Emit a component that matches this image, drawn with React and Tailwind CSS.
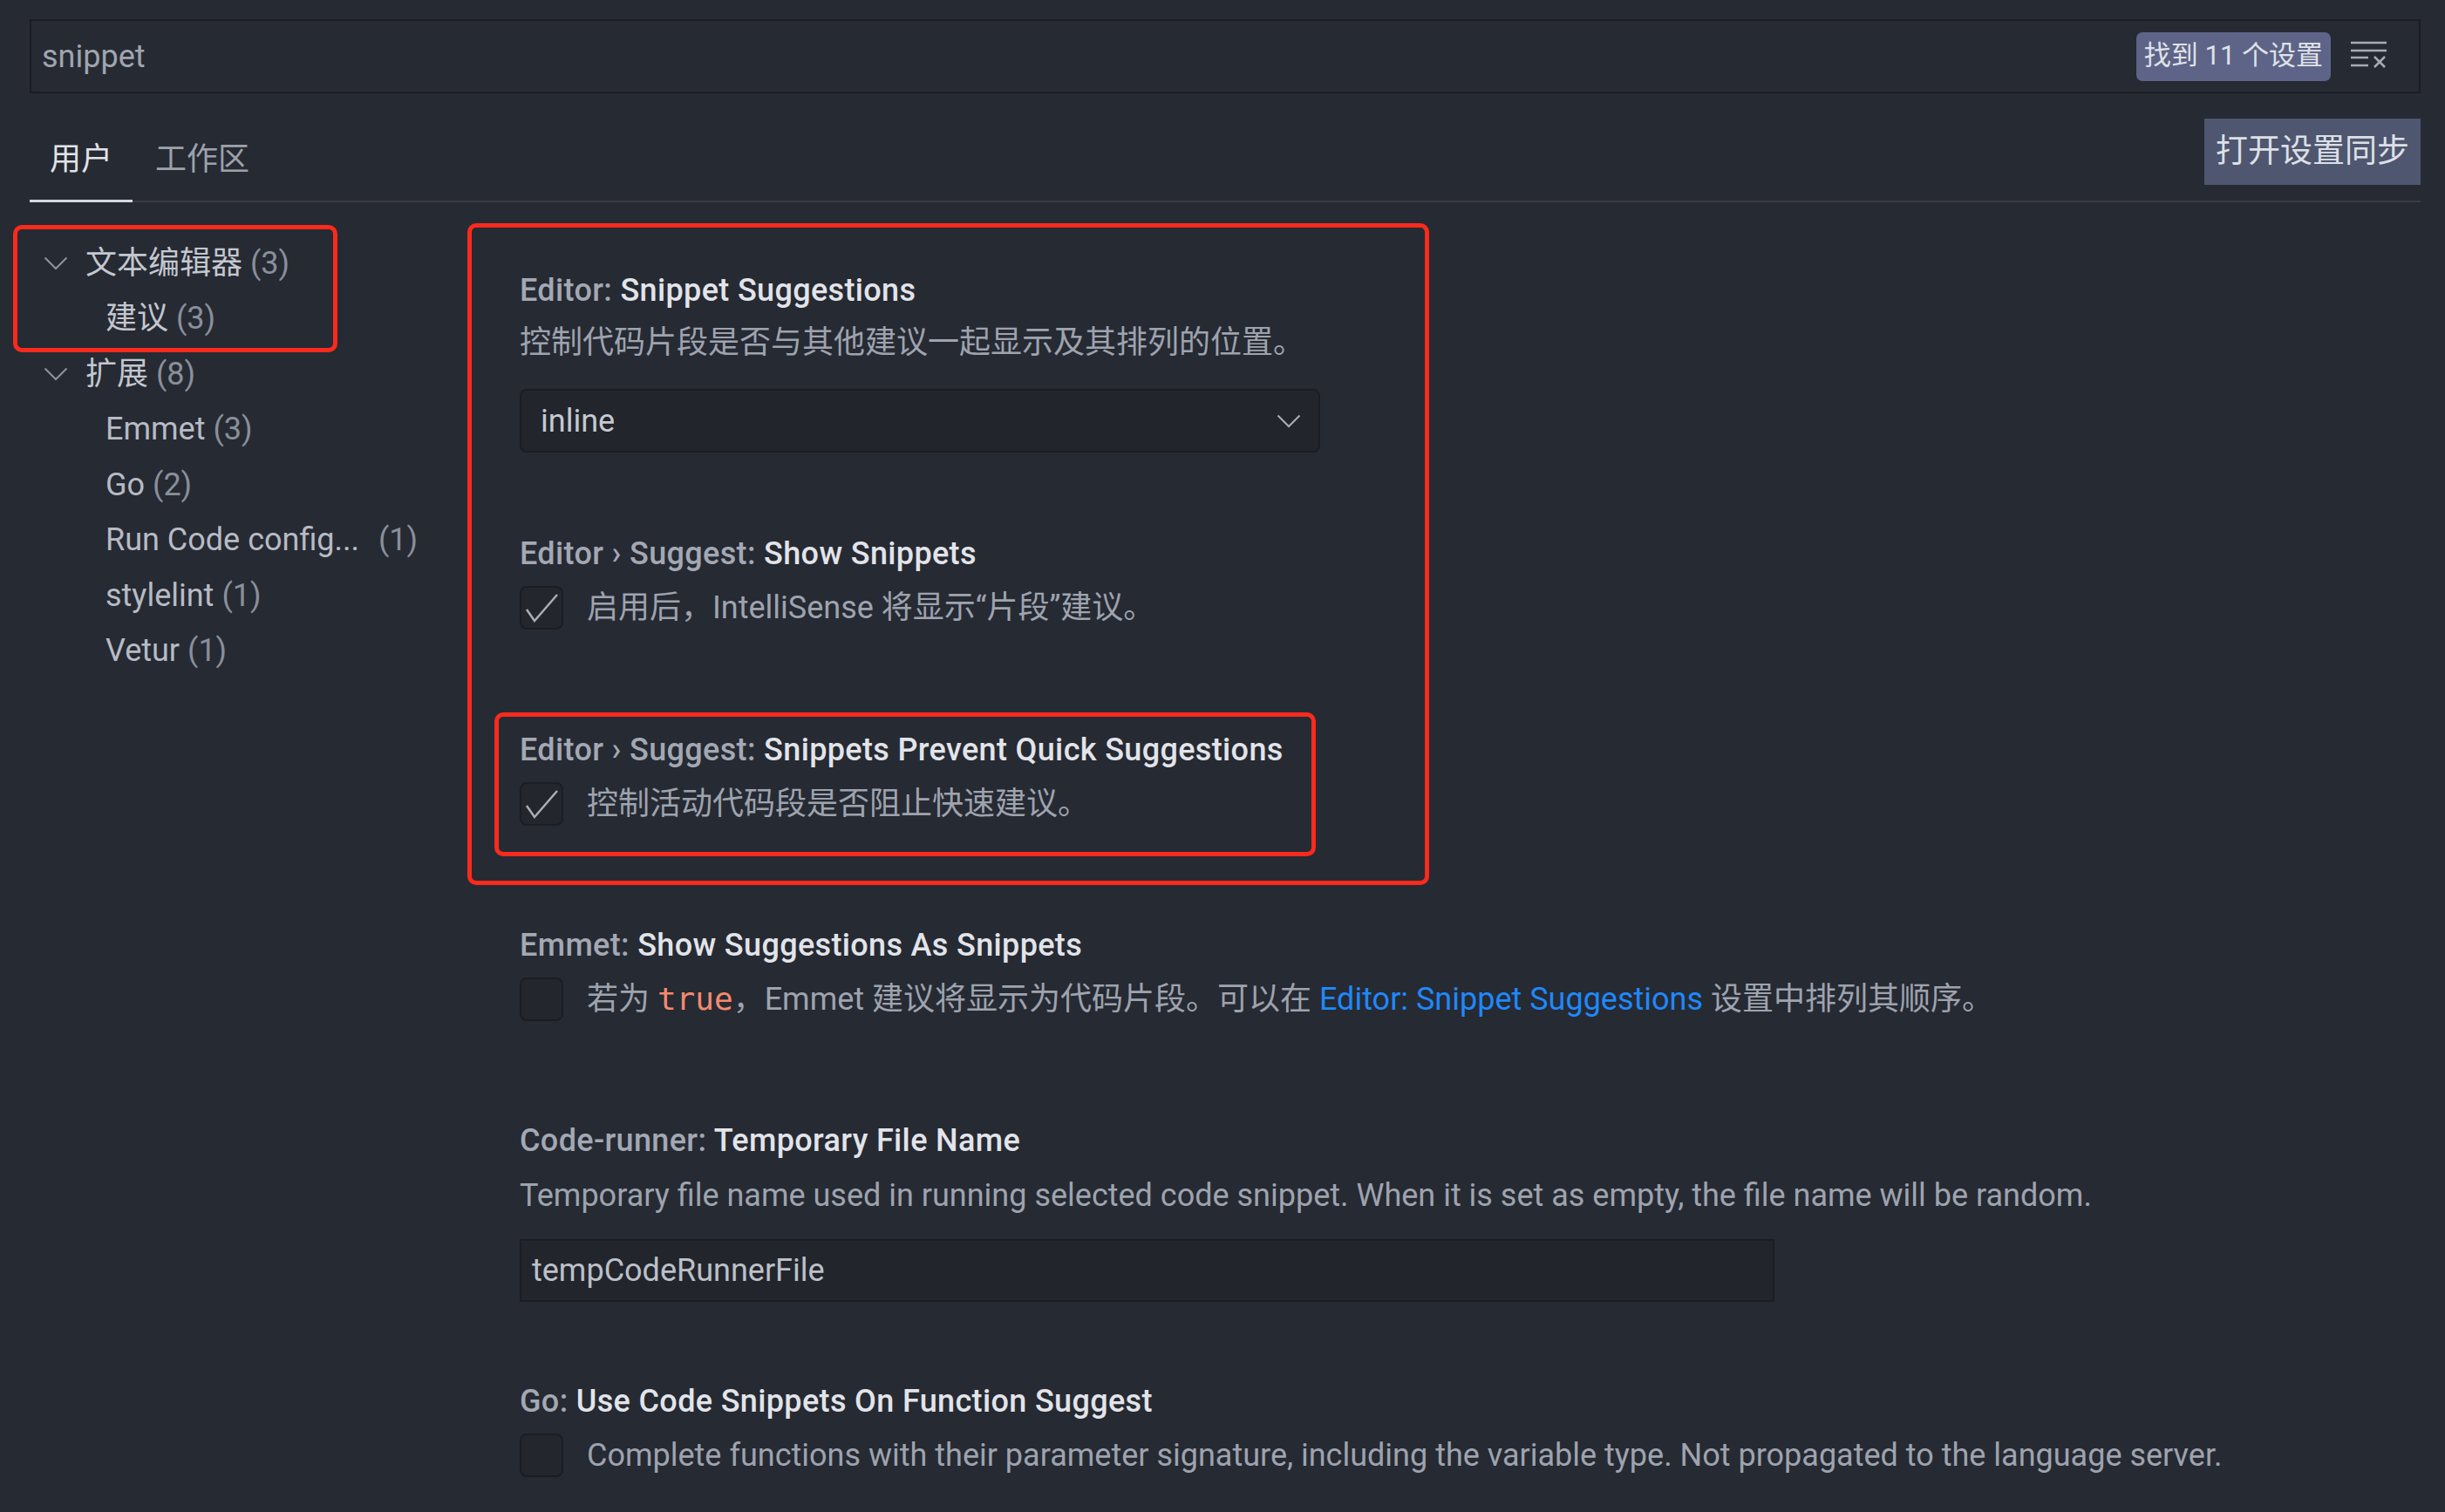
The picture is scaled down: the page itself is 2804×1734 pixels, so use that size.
import React from 'react';

const SANS = "font-['Roboto','Noto_Sans_CJK_SC',sans-serif]";

const Chevron = ({ className }) => (
  <svg className={className} width="28" height="16" viewBox="0 0 28 16" fill="none">
    <path d="M1.5 1.5 L14 14 L26.5 1.5" stroke="currentColor" strokeWidth="2" />
  </svg>
);

const FilterIcon = () => (
  <svg width="42" height="32" viewBox="0 0 42 32" fill="none" stroke="#a6abb4" strokeWidth="2.5">
    <path d="M0 2 H41" />
    <path d="M0 11 H41" />
    <path d="M0 19 H20" />
    <path d="M0 28 H20" />
    <path d="M27 18 L39 30 M39 18 L27 30" />
  </svg>
);

const Checkbox = ({ checked }) => (
  <div className="flex h-[50px] w-[50px] shrink-0 items-center justify-center rounded-[8px] border-2 border-[#1b1d23] bg-[#23262d]">
    {checked && (
      <svg width="46" height="46" viewBox="2 2 46 46" fill="none">
        <path d="M8 27 L17 40 L43 10" stroke="#a9aeb8" strokeWidth="2.5" />
      </svg>
    )}
  </div>
);

const Title = ({ prefix, name }) => (
  <div className="h-[60px] whitespace-nowrap text-[36px] leading-[60px] font-medium tracking-[0.35px]">
    <span className="text-[#a3a8b3]">{prefix}</span>
    <span className="text-[#e2e4e9]">{name}</span>
  </div>
);

const CheckRow = ({ checked, children }) => (
  <div className="mt-[7px] flex h-[50px] items-center gap-[27px]">
    <Checkbox checked={checked} />
    <div className="whitespace-nowrap text-[36px] leading-[50px] text-[#9ea3ae]">{children}</div>
  </div>
);

const tree = [
  { label: '扩展', count: '(8)', level: 1 },
  { label: 'Emmet', count: '(3)', level: 2 },
  { label: 'Go', count: '(2)', level: 2 },
  { label: 'Run Code config...', count: '(1)', level: 2, wide: true },
  { label: 'stylelint', count: '(1)', level: 2 },
  { label: 'Vetur', count: '(1)', level: 2 },
];

const TreeRow = ({ label, count, level, wide }) => (
  <div className="flex h-[63.5px] items-center whitespace-nowrap text-[36px]">
    {level === 1 ? (
      <>
        <Chevron className="ml-[16px] mr-[20px] text-[#8e939d]" />
        <span className="text-[#c3c7cf]">{label}</span>
      </>
    ) : (
      <span className="ml-[87px] text-[#b7bbc4]">{label}</span>
    )}
    <span className={wide ? 'ml-[22px] text-[#8a8f9a]' : 'ml-[9px] text-[#8a8f9a]'}>{count}</span>
  </div>
);

export default function App() {
  return (
    <div className={`${SANS} h-[1734px] w-[2804px] overflow-hidden bg-[#262a33] pl-[34px] pr-[28px] pt-[22px]`}>
      {/* search */}
      <div className="flex h-[85px] items-center border-2 border-[#1b1d22] pl-[12px] pr-[36px]">
        <div className="flex-1 text-[36px] text-[#a0a5ae]">snippet</div>
        <div className="flex h-[56px] items-center rounded-[7px] bg-[#5e6487] px-[9px] text-[31px] text-[#dfe2e8]">
          找到 11 个设置
        </div>
        <div className="ml-[23px] mb-[4px]">
          <FilterIcon />
        </div>
      </div>

      {/* tabs */}
      <div className="mt-[29px] flex items-start justify-between border-b-2 border-[#3b3d42]">
        <div className="flex h-[94px] text-[36px]">
          <div className="relative flex items-center px-[23px] text-[#e1e3e7]">
            用户
            <div className="absolute -bottom-[2px] left-0 right-0 h-[3px] bg-[#d5d8dd]" />
          </div>
          <div className="flex items-center px-[26px] text-[#9ca1ab]">工作区</div>
        </div>
        <div className="flex h-[76px] items-center bg-[#4f5670] px-[13px] text-[37px] text-[#dde0e6]">
          打开设置同步
        </div>
      </div>

      <div className="flex">
        {/* sidebar */}
        <div className="w-[502px] shrink-0 pt-[38px]">
          <div className="-mb-[7px] -ml-[19px] -mt-[12px] w-[372px] rounded-[10px] border-[5px] border-[#fa2a1c] pb-[2px] pl-[14px] pt-[7px]">
            <div className="flex h-[63.5px] items-center whitespace-nowrap text-[36px]">
              <Chevron className="ml-[16px] mr-[20px] text-[#8e939d]" />
              <span className="text-[#c3c7cf]">文本编辑器</span>
              <span className="ml-[9px] text-[#8a8f9a]">(3)</span>
            </div>
            <div className="flex h-[63.5px] items-center whitespace-nowrap text-[36px]">
              <span className="ml-[87px] text-[#c3c7cf]">建议</span>
              <span className="ml-[9px] text-[#8a8f9a]">(3)</span>
            </div>
          </div>
          {tree.map((t, i) => (
            <TreeRow key={i} {...t} />
          ))}
        </div>

        {/* settings */}
        <div className="flex flex-col pt-[24px]">
          <div className="w-[1103px] rounded-[10px] border-[5px] border-[#fa2a1c] pb-[28px] pl-[55px] pt-[42px]">
            <Title prefix="Editor: " name="Snippet Suggestions" />
            <div className="h-[60px] whitespace-nowrap text-[36px] leading-[60px] text-[#9ea3ae]">
              控制代码片段是否与其他建议一起显示及其排列的位置。
            </div>
            <div className="mt-[23px] flex h-[73px] w-[918px] items-center justify-between rounded-[8px] border-2 border-[#1b1d23] bg-[#22252c] pl-[22px] pr-[20px]">
              <span className="text-[36px] text-[#c5c9d0]">inline</span>
              <Chevron className="text-[#a9aeb8]" />
            </div>

            <div className="mt-[86px]">
              <Title prefix="Editor › Suggest: " name="Show Snippets" />
              <CheckRow checked>启用后，IntelliSense 将显示“片段”建议。</CheckRow>
            </div>

            <div className="-ml-[29px] mt-[95px] w-[942px] rounded-[10px] border-[5px] border-[#fa2a1c] pb-[30px] pl-[24px] pt-[8px]">
              <Title prefix="Editor › Suggest: " name="Snippets Prevent Quick Suggestions" />
              <CheckRow checked>控制活动代码段是否阻止快速建议。</CheckRow>
            </div>
          </div>

          <div className="mt-[39px] pl-[60px]">
            <Title prefix="Emmet: " name="Show Suggestions As Snippets" />
            <CheckRow>
              若为 <span className="font-['DejaVu_Sans_Mono',monospace] text-[#f38b6d]">true</span>，Emmet 建议将显示为代码片段。可以在{' '}
              <span className="text-[#1f88fa]">Editor: Snippet Suggestions</span> 设置中排列其顺序。
            </CheckRow>
          </div>

          <div className="mt-[107px] pl-[60px]">
            <Title prefix="Code-runner: " name="Temporary File Name" />
            <div className="mt-[3px] h-[60px] whitespace-nowrap text-[36px] leading-[60px] text-[#9ea3ae]">
              Temporary file name used in running selected code snippet. When it is set as empty, the file name will be random.
            </div>
            <div className="mt-[20px] flex h-[72px] w-[1439px] items-center border-2 border-[#1b1d22] bg-[#22252c] pl-[12px] text-[36px] text-[#bcc0c8]">
              tempCodeRunnerFile
            </div>
          </div>

          <div className="mt-[84px] pl-[60px]">
            <Title prefix="Go: " name="Use Code Snippets On Function Suggest" />
            <CheckRow>
              Complete functions with their parameter signature, including the variable type. Not propagated to the language server.
            </CheckRow>
          </div>
        </div>
      </div>
    </div>
  );
}
